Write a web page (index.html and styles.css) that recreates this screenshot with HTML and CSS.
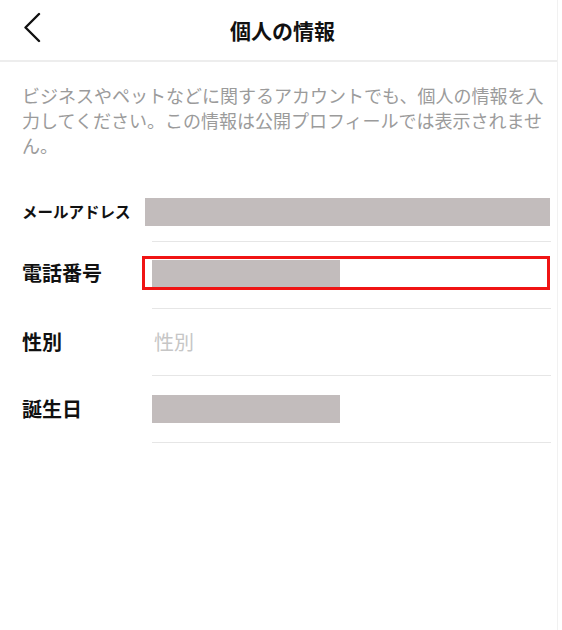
FILE: index.html
```html
<!DOCTYPE html>
<html lang="ja">
<head>
<meta charset="utf-8">
<title>個人の情報</title>
<link rel="stylesheet" href="styles.css">
</head>
<body>
<div class="page">
  <header class="header">
    <svg class="back" width="20" height="32" viewBox="0 0 20 32" aria-hidden="true">
      <polyline points="15,2 1.5,15.5 15,29" fill="none" stroke="#111" stroke-width="2.4" stroke-linecap="round" stroke-linejoin="round"/>
    </svg>
    <h1 class="title">個人の情報</h1>
  </header>
  <p class="desc">ビジネスやペットなどに関するアカウントでも、個人の情報を入力してください。この情報は公開プロフィールでは表示されません。</p>
  <div class="form">
    <div class="row">
      <div class="row-main row-email">
        <span class="label label-small">メールアドレス</span>
        <span class="mask mask-email"></span>
      </div>
      <div class="divider"></div>
    </div>
    <div class="row">
      <div class="row-main row-phone">
        <span class="label">電話番号</span>
        <span class="focus-box"><span class="mask mask-short-inner"></span></span>
      </div>
      <div class="divider"></div>
    </div>
    <div class="row">
      <div class="row-main">
        <span class="label">性別</span>
        <span class="placeholder">性別</span>
      </div>
      <div class="divider"></div>
    </div>
    <div class="row">
      <div class="row-main">
        <span class="label">誕生日</span>
        <span class="mask mask-short"></span>
      </div>
      <div class="divider"></div>
    </div>
  </div>
</div>
</body>
</html>
```
FILE: styles.css
```css
* { box-sizing: border-box; }
html, body {
  margin: 0;
  padding: 0;
  background: #fff;
}
body {
  font-family: "Noto Sans CJK JP", "Noto Sans", sans-serif;
  color: #111;
}
.page {
  width: 558px;
  min-height: 630px;
  border-right: 1px solid #f1f1f1;
}
.header {
  position: relative;
  height: 62px;
  border-bottom: 2px solid #ededed;
  display: flex;
  align-items: center;
  justify-content: center;
}
.back {
  position: absolute;
  left: 24px;
  top: 12px;
}
.title {
  margin: 0;
  padding-left: 8px;
  font-size: 21px;
  font-weight: 700;
  line-height: 30px;
}
.desc {
  margin: 21px 0 0 0;
  padding: 0 12px 0 22px;
  font-size: 18px;
  line-height: 25px;
  color: #9b9b9b;
  height: 92px;
}
.form {
  display: flex;
  flex-direction: column;
}
.row {
  display: flex;
  flex-direction: column;
}
.row-main {
  height: 66px;
  display: flex;
  align-items: center;
}
.row-email { padding-top: 5px; }
.row-phone { padding-bottom: 4px; }
.label {
  width: 142px;
  padding-left: 22px;
  font-size: 20px;
  font-weight: 700;
  line-height: 28px;
  white-space: nowrap;
}
.label-small {
  font-size: 15.5px;
}
.divider {
  height: 1px;
  margin: 0 6px 0 152px;
  background: #e6e6e6;
}
.mask {
  display: block;
  background: #c2bcbc;
}
.mask-email {
  margin-left: 3px;
  margin-top: 3px;
  width: 405px;
  height: 28px;
}
.focus-box {
  display: flex;
  align-items: stretch;
  width: 408px;
  height: 34px;
  border: 3px solid #f01414;
  padding: 1px 0 0 7px;
}
.mask-short-inner {
  width: 188px;
}
.mask-short {
  margin-left: 10px;
  width: 188px;
  height: 28px;
}
.placeholder {
  margin-left: 12px;
  font-size: 20px;
  line-height: 28px;
  color: #c6c6c6;
}
```
